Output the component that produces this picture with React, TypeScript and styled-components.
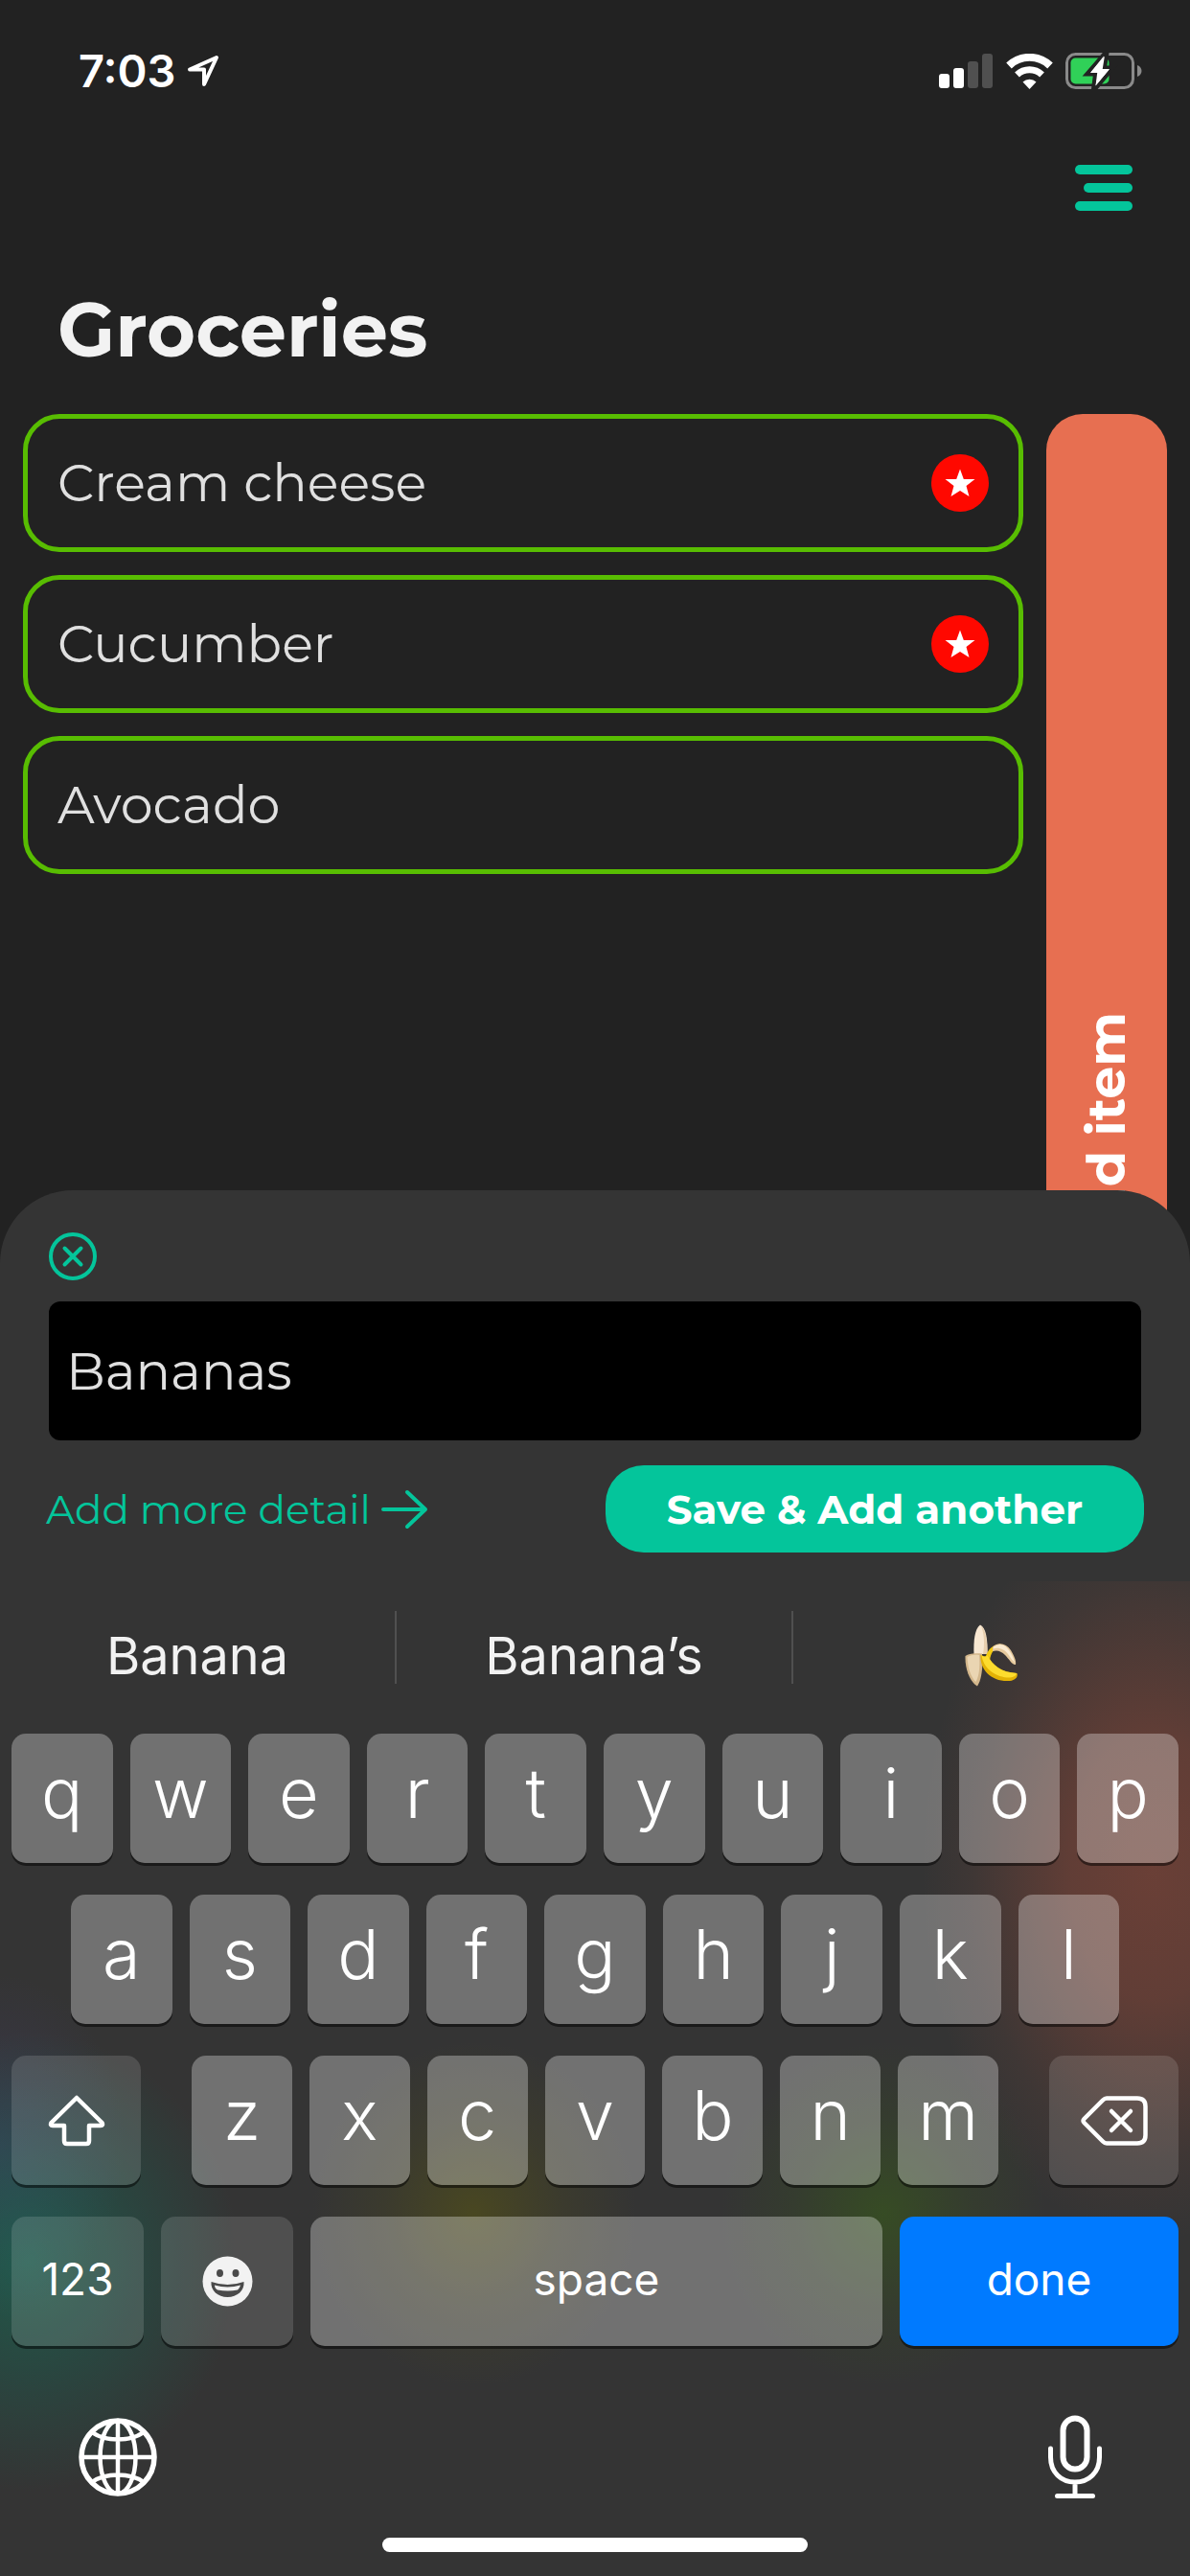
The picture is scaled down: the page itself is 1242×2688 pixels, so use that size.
import React from "react";
import styled, { createGlobalStyle, css } from "styled-components";

const brandFont = `Montserrat, Inter, "Open Sans", sans-serif`;
const systemFont = `Inter, Roboto, sans-serif`;

const color = {
  page: "#222222",
  sheet: "#343434",
  teal: "#04c59b",
  green: "#58bd02",
  coral: "#e76f51",
  red: "#ff0800",
  text: "#e0e0e0",
};

const GlobalStyle = createGlobalStyle`
  *, *::before, *::after { box-sizing: border-box; }
  body { margin: 0; background: ${color.page}; font-family: ${systemFont}; }
  button, input { font: inherit; color: inherit; border: 0; margin: 0; padding: 0; background: none; }
  svg { display: block; flex: none; }
`;

const Screen = styled.div`
  display: grid;
  min-height: 100vh;
  color: #fff;
  overflow: hidden;
`;

const Page = styled.div`
  grid-area: 1 / 1;
  display: flex;
  flex-direction: column;
  padding-bottom: 748px;
`;

const Dock = styled.div`
  grid-area: 1 / 1;
  align-self: end;
  z-index: 1;
`;

const StatusBar = styled.div`
  display: flex;
  align-items: center;
  justify-content: space-between;
  height: 148px;
  padding: 0 50px 0 82px;
`;

const Clock = styled.div`
  display: flex;
  align-items: center;
  gap: 12px;
  font-size: 47px;
  line-height: 56px;
  font-weight: 600;
`;

const StatusIcons = styled.div`
  display: flex;
  align-items: center;
  gap: 13px;
`;

const Toolbar = styled.nav`
  display: flex;
  align-items: center;
  justify-content: flex-end;
  height: 96px;
  padding-right: 60px;
`;

const Title = styled.h1`
  margin: 0;
  padding: 52px 60px 40px;
  font-family: ${brandFont};
  font-size: 78px;
  line-height: 96px;
  font-weight: 700;
  color: #f2f2f2;
`;

const Main = styled.main`
  flex: 1;
  display: flex;
  gap: 24px;
  padding: 0 24px;
`;

const List = styled.ul`
  flex: 1;
  display: flex;
  flex-direction: column;
  gap: 24px;
  margin: 0;
  padding: 0;
  list-style: none;
`;

const Item = styled.li`
  display: flex;
  align-items: center;
  justify-content: space-between;
  height: 144px;
  padding: 0 31px;
  border: 5px solid ${color.green};
  border-radius: 38px;
  font-family: ${brandFont};
  font-size: 54px;
  line-height: 68px;
  font-weight: 400;
  color: ${color.text};
`;

const AddBar = styled.button`
  display: flex;
  align-items: center;
  justify-content: center;
  width: 126px;
  border-radius: 38px;
  background: ${color.coral};
  font-family: ${brandFont};
  font-size: 54px;
  font-weight: 700;
  line-height: 68px;
`;

const VerticalLabel = styled.span`
  writing-mode: vertical-rl;
  transform: rotate(180deg);
`;

const Sheet = styled.form`
  display: flex;
  flex-direction: column;
  padding: 42px 48px 30px;
  border-radius: 76px 76px 0 0;
  background: ${color.sheet};
  font-family: ${brandFont};
`;

const CloseButton = styled.button`
  display: flex;
  align-self: flex-start;
  padding: 0 2px;
`;

const ItemInput = styled.input`
  height: 145px;
  margin: 20px 3px 26px;
  padding: 0 18px;
  border-radius: 12px;
  background: #000;
  font-size: 54px;
  font-weight: 400;
  color: ${color.text};
  outline: 0;
`;

const Actions = styled.div`
  display: flex;
  align-items: center;
  justify-content: space-between;
`;

const DetailLink = styled.a`
  display: flex;
  align-items: center;
  gap: 10px;
  font-size: 42px;
  line-height: 52px;
  font-weight: 400;
  color: ${color.teal};
  text-decoration: none;
`;

const SaveButton = styled.button`
  height: 91px;
  padding: 0 64px;
  border-radius: 40px;
  background: ${color.teal};
  font-size: 42px;
  line-height: 52px;
  font-weight: 700;
`;

const Keyboard = styled.section`
  padding: 0 12px 25px;
  background:
    radial-gradient(240px 390px at calc(100% - 40px) 300px, rgba(231, 90, 60, 0.3), rgba(231, 90, 60, 0.25) 35%, rgba(231, 100, 70, 0.06) 78%, transparent),
    radial-gradient(170px 180px at 495px 660px, rgba(110, 105, 0, 0.36), rgba(110, 105, 0, 0.12) 55%, transparent),
    radial-gradient(170px 180px at 922px 660px, rgba(60, 130, 0, 0.3), rgba(60, 130, 0, 0.1) 55%, transparent),
    radial-gradient(220px 240px at 30px 710px, rgba(0, 150, 110, 0.38), rgba(0, 140, 110, 0.2) 50%, transparent),
    radial-gradient(130px 180px at 0 590px, rgba(80, 70, 150, 0.24), transparent),
    #343434;
`;

const Suggestions = styled.div`
  display: grid;
  grid-template-columns: repeat(3, 1fr);
  align-items: center;
  height: 159px;
  padding-bottom: 22px;
  margin: 0 -12px;
`;

const Suggestion = styled.button`
  display: flex;
  align-items: center;
  justify-content: center;
  height: 76px;
  font-size: 54px;
  line-height: 64px;
  color: #f2f2f2;
  padding-top: 18px;

  &:not(:last-child) {
    border-right: 2px solid #505050;
  }
`;

const Rows = styled.div`
  display: flex;
  flex-direction: column;
  gap: 33px;
`;

const KeyRow = styled.div<{ $inset?: number; $gap?: number }>`
  display: flex;
  gap: ${(p) => p.$gap ?? 18}px;
  padding: 0 ${(p) => p.$inset ?? 0}px;
`;

const KeyGroup = styled.div`
  flex: 1;
  display: flex;
  gap: 18px;
`;

type KeyTone = "letter" | "special" | "primary";

const tones = {
  letter: css`background: rgba(255, 255, 255, 0.3);`,
  special: css`background: rgba(255, 255, 255, 0.135);`,
  primary: css`background: #007aff;`,
};

const Key = styled.button<{ $tone?: KeyTone; $width?: number; $word?: boolean }>`
  display: flex;
  align-items: center;
  justify-content: center;
  flex: ${(p) => (p.$width ? `0 0 ${p.$width}px` : "1 1 0")};
  min-width: 0;
  height: 135px;
  padding-bottom: ${(p) => (p.$word ? 6 : 12)}px;
  border-radius: 15px;
  box-shadow: 0 3px 0 rgba(0, 0, 0, 0.5);
  font-size: ${(p) => (p.$word ? 46 : 72)}px;
  line-height: 1;
  font-weight: ${(p) => (p.$word ? 400 : 300)};
  ${(p) => tones[p.$tone ?? "letter"]}
`;

const IconKey = styled(Key)`
  padding-bottom: 0;
`;

const KeyboardFooter = styled.div`
  display: flex;
  align-items: center;
  justify-content: space-between;
  height: 200px;
  padding: 32px 79px 0 70px;
`;

const IconButton = styled.button`
  display: flex;
`;

const HomeIndicator = styled.div`
  width: 444px;
  max-width: 50%;
  height: 15px;
  margin: 0 auto;
  border-radius: 8px;
  background: #fff;
`;

const LocationIcon = () => (
  <svg width="34" height="34" viewBox="0 0 34 34" fill="none" stroke="#fff" strokeWidth="4" strokeLinejoin="round">
    <path d="M31 3 3 15.500h15V31Z" />
  </svg>
);

const SignalIcon = () => (
  <svg width="57" height="36" viewBox="0 0 57 36">
    <rect x="0" y="21" width="11" height="15" rx="3" fill="#fff" />
    <rect x="15" y="15" width="11" height="21" rx="3" fill="#fff" />
    <rect x="30" y="8" width="11" height="28" rx="3" fill="#505050" />
    <rect x="45" y="0" width="11" height="36" rx="3" fill="#505050" />
  </svg>
);

const WifiIcon = () => (
  <svg width="49" height="37" viewBox="0 0 49 37" fill="none" stroke="#fff">
    <path d="M3 12.500a31 31 0 0 1 43 0" strokeWidth="8" />
    <path d="M11.500 22a19 19 0 0 1 26 0" strokeWidth="7" />
    <path d="M24.500 37 17.500 29.500a10.500 10.500 0 0 1 14 0Z" fill="#fff" stroke="none" />
  </svg>
);

const BatteryIcon = () => (
  <svg width="80" height="40" viewBox="0 0 80 40">
    <rect x="1.500" y="2.500" width="69" height="35" rx="9" fill="none" stroke="#8a8a8a" strokeWidth="3" />
    <path d="M75 14c3 1 4.500 3.500 4.500 6S78 25 75 26Z" fill="#8a8a8a" />
    <rect x="5.500" y="6.500" width="40" height="27" rx="5" fill="#30d158" />
    <path d="M41.500 1 22 23.500h9L29 39h2L50 16.500h-9L43.500 1Z" fill="#fff" stroke={color.page} strokeWidth="4" />
    <path d="M40 4.500 26 22h8.500L31.500 35.500 46 18h-8.500Z" fill="#fff" />
  </svg>
);

const MenuIcon = () => (
  <svg width="60" height="48" viewBox="0 0 60 48" fill={color.teal}>
    <rect width="60" height="10" rx="5" />
    <rect x="9" y="19" width="51" height="10" rx="5" />
    <rect y="38" width="60" height="10" rx="5" />
  </svg>
);

const StarBadge = () => (
  <svg width="60" height="60" viewBox="0 0 60 60" role="img" aria-label="Priority">
    <circle cx="30" cy="30" r="30" fill={color.red} />
    <path d="M30 15.500 33.800 26H45.500L36.500 33 39.500 44 30 38 20.500 44 23.500 33 14.500 26H26.200Z" fill="#fff" />
  </svg>
);

const CloseIcon = () => (
  <svg width="52" height="54" viewBox="0 0 52 54" fill="none" stroke={color.teal} strokeWidth="4" strokeLinecap="round">
    <circle cx="26" cy="27" r="23" />
    <path d="m17.500 18.500 17 17m0-17-17 17" />
  </svg>
);

const ArrowIcon = () => (
  <svg width="50" height="42" viewBox="0 0 50 42" fill="none" stroke={color.teal} strokeWidth="4" strokeLinecap="round" strokeLinejoin="round">
    <path d="M3 21h44M28 3l19 18-19 18" />
  </svg>
);

const BananaIcon = () => (
  <svg width="56" height="66" viewBox="0 0 56 66" role="img" aria-label="Banana">
    <path d="M9.500 31C9 18 10 5 16 0.500 22 3 24 16 23.500 31Z" fill="#f8e8d2" />
    <path d="M17 1.500C22 6 23.500 17 23.500 31H19C21 20 20 9 17 1.500Z" fill="#e8cfae" />
    <path d="M0.500 33C5 30 12 30 18 30.500 19 43 18 57 13 64.500 5 60 0 46 0.500 33Z" fill="#d3b78c" />
    <path d="M2.500 34C7 31.500 11 31.500 15 32 16 44 15 54 11.500 60 6 55 3 45 2.500 34Z" fill="#ead5b2" />
    <path d="M22 33C24 26 30 21 37 20.500L39 23C31 24 27 29 26 38Z" fill="#f3ca12" />
    <path d="M29 23.500C35 18 43 19.500 48 27 51 32 54 38 53 42 50 43 46 36 42 32 38 28 34 26.500 29 28Z" fill="#e6c99c" />
    <path d="M30 23.500C36 19 42 20.500 46 27 49 31 51 36 52 40 47 35 45 29 40 26.500 36 24.500 33 24.500 30 25.500Z" fill="#faead0" />
    <path d="M16.500 31.500C19 34 22 34 23.500 32 29 43 38 50 54.500 51 56 55 52 58.500 47 59 29 60.500 15 48 16.500 31.500Z" fill="#e3b205" />
    <path d="M17.500 32C20 34 22 34 23.500 32 29 43 38 50 54 51 53 55 48 56 44 55.500 30 54 19 45 17.500 32Z" fill="#fddc2e" />
  </svg>
);

const ShiftIcon = () => (
  <svg width="60" height="54" viewBox="0 0 60 54" fill="none" stroke="#fff" strokeWidth="4.500" strokeLinejoin="round">
    <path d="M30 3 3.500 29Q2 32 5 32h12v16q0 3 3 3h20q3 0 3-3V32h12q3 0 1.500-3Z" />
  </svg>
);

const BackspaceIcon = () => (
  <svg width="70" height="52" viewBox="0 0 70 52" fill="none" stroke="#fff" strokeWidth="4.500" strokeLinecap="round" strokeLinejoin="round">
    <path d="M27 2.500h32q8.500 0 8.500 8.500v30q0 8.500-8.500 8.500H27q-2 0-4-2L3.500 28q-2-2 0-4L23 4.500q2-2 4-2Z" />
    <path d="m32 16 20 20m0-20L32 36" />
  </svg>
);

const SmileIcon = () => (
  <svg width="53" height="53" viewBox="0 0 53 53">
    <circle cx="26.500" cy="26.500" r="26" fill="#f2f2f2" />
    <ellipse cx="18.500" cy="18" rx="3.500" ry="4" fill="#4a4a4a" />
    <ellipse cx="35" cy="18" rx="3.500" ry="4" fill="#4a4a4a" />
    <path d="M9.500 27q17 6 34 0c1 9-7 16-17 16s-18-7-17-16Z" fill="#4a4a4a" />
    <path d="M13 30.500q13.500 4 27 0c-1 3-2 4-3 5q-10 2-21 0c-2-1-3-3-3-5Z" fill="#f2f2f2" />
  </svg>
);

const GlobeIcon = () => (
  <svg width="82" height="82" viewBox="0 0 82 82" fill="none" stroke="#fff" strokeWidth="4.500">
    <circle cx="41" cy="41" r="38" strokeWidth="5.500" />
    <ellipse cx="41" cy="41" rx="18.500" ry="38" />
    <path d="M41 3v76M3 41h76M14 15c14 10 40 10 54 0M14 67c14-10 40-10 54 0" />
  </svg>
);

const MicIcon = () => (
  <svg width="58" height="88" viewBox="0 0 58 88" fill="none" stroke="#fff" strokeWidth="5" strokeLinecap="round">
    <rect x="16.500" y="3.500" width="25" height="53" rx="12.500" strokeWidth="6" />
    <path d="M3.500 35v9c0 16 11 26 25.500 26s25.500-10 25.500-26v-9M29 70v14M10.500 84.500h37" />
  </svg>
);

const groceries = [
  { name: "Cream cheese", starred: true },
  { name: "Cucumber", starred: true },
  { name: "Avocado", starred: false },
];

const letters = (row: string) =>
  row.split("").map((letter) => (
    <Key key={letter} type="button">
      {letter}
    </Key>
  ));

export default function App() {
  return (
    <>
      <GlobalStyle />
      <Screen>
        <Page>
          <StatusBar>
            <Clock>
              7:03
              <LocationIcon />
            </Clock>
            <StatusIcons>
              <SignalIcon />
              <WifiIcon />
              <BatteryIcon />
            </StatusIcons>
          </StatusBar>
          <Toolbar>
            <IconButton type="button" aria-label="Menu">
              <MenuIcon />
            </IconButton>
          </Toolbar>
          <Title>Groceries</Title>
          <Main>
            <List>
              {groceries.map((item) => (
                <Item key={item.name}>
                  {item.name}
                  {item.starred && <StarBadge />}
                </Item>
              ))}
            </List>
            <AddBar type="button">
              <VerticalLabel>Add item</VerticalLabel>
            </AddBar>
          </Main>
        </Page>

        <Dock>
          <Sheet onSubmit={(e) => e.preventDefault()}>
            <CloseButton type="button" aria-label="Close">
              <CloseIcon />
            </CloseButton>
            <ItemInput type="text" aria-label="Item name" defaultValue="Bananas" />
            <Actions>
              <DetailLink href="#detail">
                Add more detail
                <ArrowIcon />
              </DetailLink>
              <SaveButton type="submit">Save &amp; Add another</SaveButton>
            </Actions>
          </Sheet>

          <Keyboard aria-label="Keyboard">
            <Suggestions>
              <Suggestion type="button">Banana</Suggestion>
              <Suggestion type="button">Banana’s</Suggestion>
              <Suggestion type="button">
                <BananaIcon />
              </Suggestion>
            </Suggestions>
            <Rows>
              <KeyRow>{letters("qwertyuiop")}</KeyRow>
              <KeyRow $inset={62}>{letters("asdfghjkl")}</KeyRow>
              <KeyRow $gap={53}>
                <IconKey type="button" $tone="special" $width={135} aria-label="Shift">
                  <ShiftIcon />
                </IconKey>
                <KeyGroup>{letters("zxcvbnm")}</KeyGroup>
                <IconKey type="button" $tone="special" $width={135} aria-label="Delete">
                  <BackspaceIcon />
                </IconKey>
              </KeyRow>
              <KeyRow>
                <Key type="button" $tone="special" $width={138} $word>
                  123
                </Key>
                <IconKey type="button" $tone="special" $width={138} aria-label="Emoji">
                  <SmileIcon />
                </IconKey>
                <Key type="button" $word>
                  space
                </Key>
                <Key type="button" $tone="primary" $width={291} $word>
                  done
                </Key>
              </KeyRow>
            </Rows>
            <KeyboardFooter>
              <IconButton type="button" aria-label="Next keyboard">
                <GlobeIcon />
              </IconButton>
              <IconButton type="button" aria-label="Dictate">
                <MicIcon />
              </IconButton>
            </KeyboardFooter>
            <HomeIndicator />
          </Keyboard>
        </Dock>
      </Screen>
    </>
  );
}
